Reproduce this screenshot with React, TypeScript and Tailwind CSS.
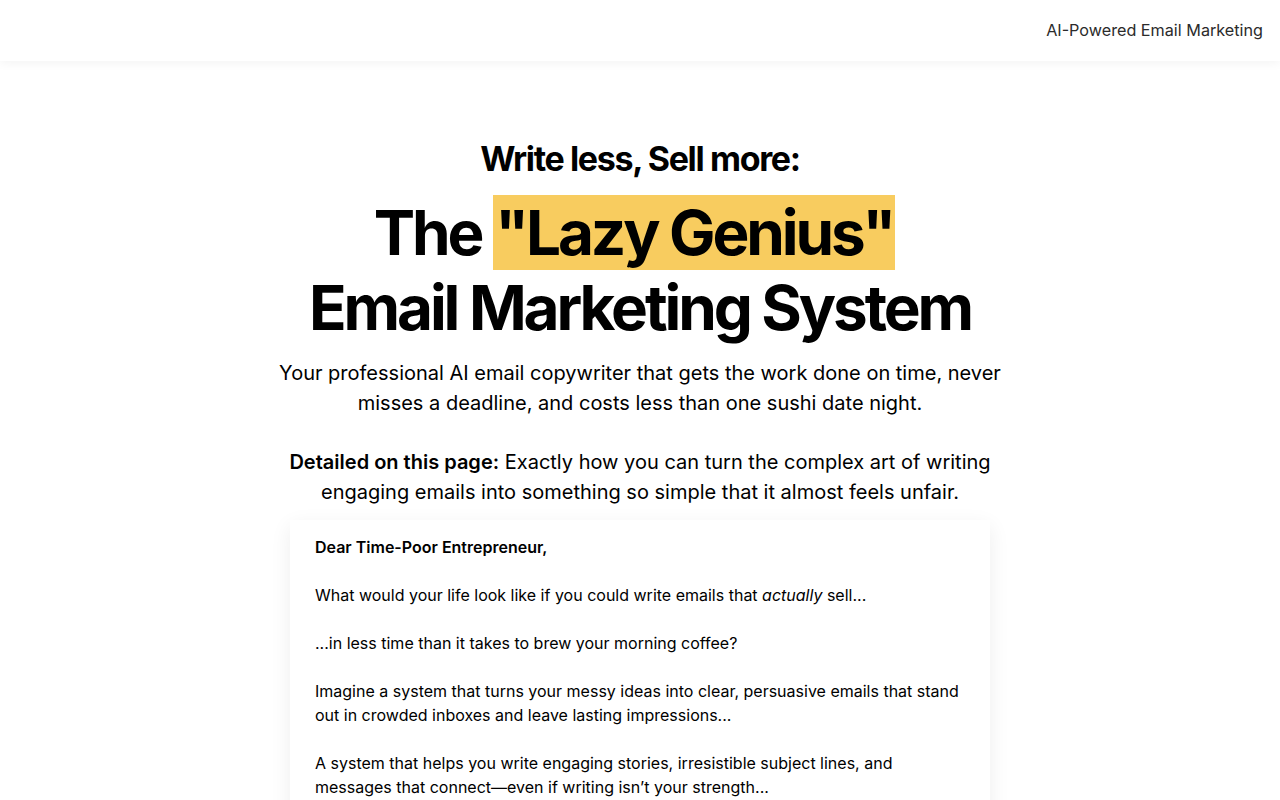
const App = () => {
  return (
    <div className="min-h-screen bg-white text-black" style={{ fontFamily: 'Inter, "Noto Sans", sans-serif' }}>
      <header className="h-[61px] bg-white shadow-[0_2px_10px_rgba(0,0,0,0.05)] flex items-center justify-end px-[17px]">
        <span className="text-[16.2px] text-[#2b2b2b]">AI-Powered Email Marketing</span>
      </header>
      <main className="flex flex-col items-center pt-[77px]">
        <h2 className="text-[34px] font-bold tracking-[-0.04em] leading-[42px]">Write less, Sell more:</h2>
        <h1 className="mt-[15px] text-[62px] font-bold tracking-[-0.05em] leading-[75px] text-center">
          The{' '}
          <span className="bg-[#f8cc5f] px-[2px] mr-[11px]">"Lazy Genius"</span>
          <br />
          Email Marketing System
        </h1>
        <p className="mt-[13px] max-w-[740px] text-center text-[20px] leading-[30px]">
          Your professional AI email copywriter that gets the work done on time, never misses a deadline, and costs less than one sushi date night.
        </p>
        <p className="mt-[29px] max-w-[740px] text-center text-[20px] leading-[30px]">
          <strong className="font-semibold">Detailed on this page:</strong> Exactly how you can turn the complex art of writing engaging emails into something so simple that it almost feels unfair.
        </p>
        <div className="mt-[13px] w-[700px] bg-white shadow-[0_6px_20px_rgba(0,0,0,0.07)] px-[25px] pt-[15px] pb-[24px] text-[16px] leading-[24px] flex flex-col gap-[24px]">
          <p className="font-semibold">Dear Time-Poor Entrepreneur,</p>
          <p>
            What would your life look like if you could write emails that <em>actually</em> sell...
          </p>
          <p>...in less time than it takes to brew your morning coffee?</p>
          <p>
            Imagine a system that turns your messy ideas into clear, persuasive emails that stand out in crowded inboxes and leave lasting impressions...
          </p>
          <p>
            A system that helps you write engaging stories, irresistible subject lines, and messages that connect—even if writing isn’t your strength...
          </p>
        </div>
      </main>
    </div>
  );
};

export default App;
